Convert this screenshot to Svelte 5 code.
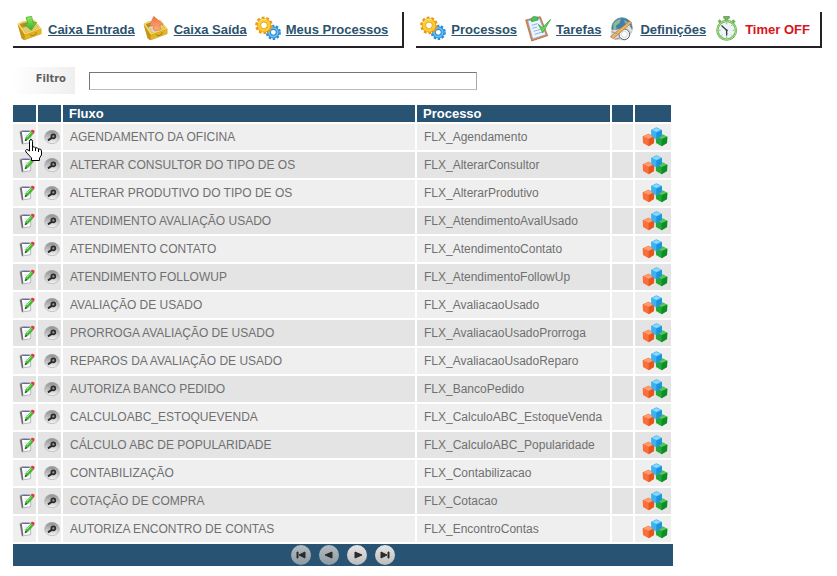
<script lang="ts">
  type NavItem = { icon: string; label: string; alert?: boolean };

  const userMenu: NavItem[] = [
    { icon: 'inbox', label: 'Caixa Entrada' },
    { icon: 'outbox', label: 'Caixa Saída' },
    { icon: 'gears', label: 'Meus Processos' },
  ];

  const adminMenu: NavItem[] = [
    { icon: 'gears', label: 'Processos' },
    { icon: 'tasks', label: 'Tarefas' },
    { icon: 'settings', label: 'Definições' },
    { icon: 'timer', label: 'Timer OFF', alert: true },
  ];

  const flows = [
    { name: 'AGENDAMENTO DA OFICINA', process: 'FLX_Agendamento' },
    { name: 'ALTERAR CONSULTOR DO TIPO DE OS', process: 'FLX_AlterarConsultor' },
    { name: 'ALTERAR PRODUTIVO DO TIPO DE OS', process: 'FLX_AlterarProdutivo' },
    { name: 'ATENDIMENTO AVALIAÇÃO USADO', process: 'FLX_AtendimentoAvalUsado' },
    { name: 'ATENDIMENTO CONTATO', process: 'FLX_AtendimentoContato' },
    { name: 'ATENDIMENTO FOLLOWUP', process: 'FLX_AtendimentoFollowUp' },
    { name: 'AVALIAÇÃO DE USADO', process: 'FLX_AvaliacaoUsado' },
    { name: 'PRORROGA AVALIAÇÃO DE USADO', process: 'FLX_AvaliacaoUsadoProrroga' },
    { name: 'REPAROS DA AVALIAÇÃO DE USADO', process: 'FLX_AvaliacaoUsadoReparo' },
    { name: 'AUTORIZA BANCO PEDIDO', process: 'FLX_BancoPedido' },
    { name: 'CALCULOABC_ESTOQUEVENDA', process: 'FLX_CalculoABC_EstoqueVenda' },
    { name: 'CÁLCULO ABC DE POPULARIDADE', process: 'FLX_CalculoABC_Popularidade' },
    { name: 'CONTABILIZAÇÃO', process: 'FLX_Contabilizacao' },
    { name: 'COTAÇÃO DE COMPRA', process: 'FLX_Cotacao' },
    { name: 'AUTORIZA ENCONTRO DE CONTAS', process: 'FLX_EncontroContas' },
  ];

  // On the first page the backward buttons are disabled
  const pager = [
    { label: 'Primeira', path: 'M6 7h1v6H6zM14 7v6l-6-3z', disabled: true },
    { label: 'Anterior', path: 'M13 7v6l-7-3z', disabled: true },
    { label: 'Próxima', path: 'M8 7v6l7-3z', disabled: false },
    { label: 'Última', path: 'M6 7v6l6-3zM13 7h1v6h-1z', disabled: false },
  ];

  let filter = $state('');
  let visible = $derived(
    flows.filter((f) => (f.name + ' ' + f.process).toLowerCase().includes(filter.trim().toLowerCase()))
  );
</script>

{#snippet menu(items: NavItem[])}
  <nav class="menu">
    {#each items as item}
      <a class="menu-item" class:alert={item.alert} href="#{item.icon}">
        <svg class="menu-icon" aria-hidden="true"><use href="#i-{item.icon}" /></svg>
        <span>{item.label}</span>
      </a>
    {/each}
  </nav>
{/snippet}

<svg class="sprite" aria-hidden="true">
  <defs>
    <linearGradient id="g-green" x2="0" y2="1">
      <stop offset="0" stop-color="#8df05e" />
      <stop offset="1" stop-color="#35ae27" />
    </linearGradient>
    <linearGradient id="g-orange" x2="0" y2="1">
      <stop offset="0" stop-color="#ef7440" />
      <stop offset="1" stop-color="#ffac83" />
    </linearGradient>
    <linearGradient id="g-disc" x2="0" y2="1">
      <stop offset="0" stop-color="#8f8f8f" />
      <stop offset="0.5" stop-color="#bdbdbd" />
      <stop offset="1" stop-color="#fafafa" />
    </linearGradient>
    <g id="tray">
      <path d="M2 24 14 17 51 11 73 38 73 54 22 73 14 67z" fill="#cf9f1e" />
      <path d="M2 24 14 17 51 11 73 38 23 56z" fill="#f4d95c" />
      <path d="M8 25 17 21 49 15 66 37 26 50z" fill="#b98e28" />
      <path d="M15 35 55 24 66 37 26 50z" fill="#e3ca70" />
      <path d="M2 26 23 57 22 73 14 67z" fill="#c4951c" />
      <path d="M24 58 73 40 73 53 23 72z" fill="#e2b528" />
      <path d="M40 54 44 60 56 55 57 48" fill="none" stroke="#a87d12" stroke-width="3" />
    </g>
    <g id="gear" fill="none">
      <circle r="22" stroke-width="9" pathLength="20" stroke-dasharray="1.2 .8" />
      <circle r="15" stroke-width="13" />
    </g>
  </defs>

  <symbol id="i-inbox" viewBox="0 0 78 78">
    <use href="#tray" />
    <path d="M27 4 44 1 48 20 59 19 43 43 23 26 32 23z" fill="url(#g-green)" stroke="#45a536" stroke-width="2" />
  </symbol>

  <symbol id="i-outbox" viewBox="0 0 78 78">
    <use href="#tray" />
    <path d="M17 34 29 29 33 33 21 38zM24 43 46 36 52 41 31 49z" fill="#d9d9df" />
    <path d="M32 1 60 25 50 27 53 41 34 44 30 29 20 29z" fill="url(#g-orange)" stroke="#dd7447" stroke-width="2" />
  </symbol>

  <symbol id="i-gears" viewBox="0 0 78 78">
    <g transform="translate(55 49)">
      <use href="#gear" transform="scale(.86)" stroke="#2b8fd8" />
      <circle r="13" fill="none" stroke="#6fc0f2" stroke-width="5" />
    </g>
    <g transform="translate(27 28)">
      <use href="#gear" stroke="#e79a14" />
      <circle r="15" fill="none" stroke="#fccb33" stroke-width="9" />
      <path d="M-17-7A18 18 0 0 1 8-16" fill="none" stroke="#ffec80" stroke-width="3" />
    </g>
  </symbol>

  <symbol id="i-tasks" viewBox="0 0 78 78">
    <path d="M2 12 46 2 68 59 20 75z" fill="#e48a45" stroke="#a85c29" stroke-width="2" stroke-linejoin="round" />
    <path d="M8 14 43 6 63 56 23 69z" fill="#eaf3ff" stroke="#6e9fd6" stroke-width="2" />
    <path d="M20 28 38 23M22 37 36 33M26 46 46 40M29 55 52 48" stroke="#91b6e3" stroke-width="3" />
    <path d="M18 9Q22-1 32 2L39 4 39 12 20 17z" fill="#4fc557" stroke="#278c39" stroke-width="2" />
    <path d="M40 25 52 35 77 10 53 51z" fill="#65d553" stroke="#2f9c34" stroke-width="2" />
  </symbol>

  <symbol id="i-settings" viewBox="0 0 78 78">
    <circle cx="39" cy="36" r="31" fill="#3f7fa9" stroke="#5b8795" stroke-width="2" />
    <path d="M13 23Q23 10 36 9L32 21 21 29 23 40 13 43zM45 12Q59 16 65 31L55 29 48 21z" fill="#8ab999" />
    <path d="M6 42 23 41 61 27 70 43 62 60 47 74 15 70 5 59z" fill="#dfddd9" />
    <circle cx="46" cy="55" r="16" fill="#f6f6f6" stroke="#5d646a" stroke-width="3" />
    <circle cx="46" cy="55" r="9" fill="#fff" stroke="#c2c6ca" stroke-width="2" />
    <path d="M4 62 62 15 68 20 13 68z" fill="#efb263" stroke="#a5733c" stroke-width="2" />
    <path d="M7 47 25 53M17 70 32 66" stroke="#a3a3a3" stroke-width="4" />
  </symbol>

  <symbol id="i-timer" viewBox="0 0 78 78">
    <path d="M29 1h17v6h-4v8h-9V7h-4z" fill="#77b95b" stroke="#40743a" stroke-width="1.5" />
    <path d="M11 16 17 10 23 16 17 22zM52 16 58 10 65 17 59 22z" fill="#70b458" />
    <circle cx="38" cy="43" r="28" fill="#edf3f7" stroke="#68b350" stroke-width="7" />
    <circle cx="38" cy="43" r="28" fill="none" stroke="#a9df8b" stroke-width="3" />
    <path d="M38 20v5M38 61v5M15 43h5M56 43h5M22 27l3 3M54 27l-3 3M22 59l3-3M54 59l-3-3" stroke="#789" stroke-width="2" />
    <path d="M24 30 38 43 38 57" fill="none" stroke="#344049" stroke-width="4" stroke-linecap="round" />
    <circle cx="38" cy="43" r="3" fill="#344049" />
  </symbol>

  <symbol id="i-edit" viewBox="0 0 48 48">
    <path d="M3 8 10 5 35 6 35 41 9 45z" fill="#fafafa" stroke="#9b9ba2" stroke-width="2" />
    <path d="M3 8 8 6 13 43 9 45z" fill="#66666c" />
    <path d="M9 5H32V9H10z" fill="#6868a8" />
    <path d="M17 18H26M17 26H20" stroke="#c3c3ea" stroke-width="2" />
    <path d="M18 36 21 25 36 8 43 14 28 31z" fill="#3fbf34" stroke="#2c8529" stroke-width="1" />
    <path d="M24 24 37 10" stroke="#a0ee78" stroke-width="3" />
    <path d="M35 6Q40-1 45 4 49 9 43 14z" fill="#da3b34" />
    <path d="M17 37 20 29 25 33z" fill="#20471d" />
  </symbol>

  <symbol id="i-view" viewBox="0 0 48 48">
    <ellipse cx="24" cy="24" rx="22" ry="20" fill="url(#g-disc)" stroke="#a9a9a9" stroke-width="2" />
    <circle cx="28" cy="22" r="6" fill="#999" stroke="#2b2b2b" stroke-width="5" />
    <path d="M24 26 12 34" stroke="#2b2b2b" stroke-width="6" />
  </symbol>

  <symbol id="i-cubes" viewBox="0 0 78 60">
    <path d="M2 28 19 20 37 28 36 48 20 58 3 48z" fill="#f9703a" />
    <path d="M4 28 19 22 35 28 20 35z" fill="#ff9d6c" />
    <path d="M20 37 37 28 36 48 20 58z" fill="#e8561c" />
    <path d="M41 29 59 21 76 29 75 48 59 58 42 48z" fill="#22a838" />
    <path d="M44 29 59 23 74 29 59 36z" fill="#56cc58" />
    <path d="M59 37 76 29 75 48 59 58z" fill="#0f8c28" />
    <path d="M27 9 43 1 60 9 59 28 43 37 28 28z" fill="#3bb2f0" />
    <path d="M30 9 43 3 57 9 43 15z" fill="#86d8ff" />
    <path d="M43 17 60 9 59 28 43 37z" fill="#1c94db" />
  </symbol>
</svg>

<main class="page">
  <header class="menus">
    {@render menu(userMenu)}
    {@render menu(adminMenu)}
  </header>

  <form class="filter" onsubmit={(e) => e.preventDefault()}>
    <label for="filter" class="filter-label">Filtro</label>
    <input id="filter" type="text" class="filter-input" bind:value={filter} />
  </form>

  <section class="list">
    <table class="grid">
      <colgroup>
        <col class="col-action" />
        <col class="col-action" />
        <col />
        <col class="col-process" />
        <col class="col-blank" />
        <col class="col-cubes" />
      </colgroup>
      <thead>
        <tr>
          <th></th>
          <th></th>
          <th>Fluxo</th>
          <th>Processo</th>
          <th></th>
          <th></th>
        </tr>
      </thead>
      <tbody>
        {#each visible as flow, i (flow.process)}
          <tr>
            <td class="action">
              <button class="icon-button" aria-label="Editar {flow.name}">
                <svg class="row-icon" aria-hidden="true"><use href="#i-edit" /></svg>
              </button>
              {#if i === 0}
                <svg class="pointer" viewBox="0 0 17 22" aria-hidden="true">
                  <path
                    d="M4.500 12V2.500Q4.500.500 6 .500T7.500 2.500V8Q9.500 7 10.500 9 12.500 8 13.500 10 16.500 9.500 16.500 12V16L14.500 19V21.500H6.500V19L1 13Q0 11 1.500 10.500 3 10.500 4.500 12z"
                    fill="#fff"
                    stroke="#000"
                  />
                  <path d="M7.500 8V12M10.500 9V12M13.500 10V13" stroke="#000" />
                </svg>
              {/if}
            </td>
            <td class="action">
              <button class="icon-button" aria-label="Visualizar {flow.name}">
                <svg class="row-icon" aria-hidden="true"><use href="#i-view" /></svg>
              </button>
            </td>
            <td>{flow.name}</td>
            <td>{flow.process}</td>
            <td></td>
            <td class="action">
              <button class="icon-button wide" aria-label="Módulos {flow.name}">
                <svg class="cubes-icon" aria-hidden="true"><use href="#i-cubes" /></svg>
              </button>
            </td>
          </tr>
        {/each}
      </tbody>
    </table>

    <div class="pager">
      {#each pager as page}
        <button class="pager-button" disabled={page.disabled} aria-label={page.label}>
          <svg viewBox="0 0 20 20" aria-hidden="true"><path d={page.path} fill="#2b2b2b" stroke="#2b2b2b" /></svg>
        </button>
      {/each}
    </div>
  </section>
</main>

<style>
  :global(body) {
    background: #fff;
  }

  .sprite {
    position: absolute;
    width: 0;
    height: 0;
  }

  .page {
    padding: 12px 11px;
    font-family: Arial, 'Liberation Sans', sans-serif;
    font-size: 12px;
    color: #707070;
  }

  .menus {
    display: flex;
    flex-wrap: wrap;
    gap: 12px;
    margin-left: 2px;
  }

  .menu {
    display: flex;
    align-items: center;
    gap: 8px;
    height: 34px;
    padding: 0 14px 0 4px;
    border-right: 2px solid #252127;
    border-bottom: 2px solid #252127;
  }

  .menu:last-child {
    padding-right: 10px;
  }

  .menu-item {
    display: flex;
    align-items: center;
    gap: 5px;
    font-size: 13px;
    font-weight: bold;
    color: #2c526e;
    white-space: nowrap;
  }

  .menu-item.alert {
    color: #d8141c;
    text-decoration: none;
  }

  .menu-icon {
    width: 26px;
    height: 26px;
  }

  .filter {
    display: flex;
    align-items: center;
    gap: 14px;
    margin-top: 19px;
  }

  .filter-label {
    box-sizing: border-box;
    width: 64px;
    height: 27px;
    padding-right: 9px;
    background: linear-gradient(to right, #fff, #efefef);
    font-family: Verdana, 'DejaVu Sans', sans-serif;
    font-size: 10px;
    font-weight: bold;
    line-height: 24px;
    text-align: right;
    color: #5f5f5f;
  }

  .filter-input {
    box-sizing: border-box;
    width: 100%;
    max-width: 388px;
    height: 18px;
    padding: 0 3px;
    border: 1px solid;
    border-color: #777 #a8a8a8 #bbb #777;
    background: #fff;
    font: inherit;
    outline: none;
  }

  .list {
    max-width: 662px;
    margin-top: 9px;
  }

  .grid {
    width: 100%;
    table-layout: fixed;
    border-spacing: 2px;
  }

  .col-action {
    width: 23px;
  }

  .col-process {
    width: 193px;
  }

  .col-blank {
    width: 21px;
  }

  .col-cubes {
    width: 36px;
  }

  th {
    height: 17px;
    padding: 0 6px;
    background: #285372;
    font-size: 13px;
    line-height: 17px;
    text-align: left;
    color: #fff;
  }

  td {
    height: 26px;
    padding: 0 7px;
    background: #efefef;
    line-height: 16px;
    white-space: nowrap;
  }

  tbody tr:nth-child(even) td {
    background: #e4e4e4;
  }

  th:empty,
  td:empty {
    padding: 0;
  }

  td.action {
    position: relative;
    padding: 0;
  }

  .icon-button {
    display: flex;
    justify-content: flex-end;
    width: 100%;
    padding: 0 1px 0 0;
    border: none;
    background: none;
    cursor: pointer;
  }

  .icon-button.wide {
    padding-right: 3px;
  }

  .row-icon {
    width: 16px;
    height: 16px;
  }

  .cubes-icon {
    width: 26px;
    height: 20px;
  }

  .pointer {
    position: absolute;
    top: 15px;
    left: 12px;
    z-index: 1;
    width: 17px;
    height: 22px;
  }

  .pager {
    display: flex;
    align-items: center;
    justify-content: center;
    gap: 8px;
    height: 22px;
    background: #285372;
    margin-left: 2px;
  }

  .pager-button {
    width: 20px;
    height: 20px;
    padding: 0;
    border: none;
    border-radius: 50%;
    background: linear-gradient(#e6e6e6, #bdbdbd);
    cursor: pointer;
  }

  .pager-button:disabled {
    background: linear-gradient(#b4bcc2, #8d9aa3);
    cursor: default;
  }

  .pager-button svg {
    display: block;
    width: 20px;
    height: 20px;
  }
</style>
